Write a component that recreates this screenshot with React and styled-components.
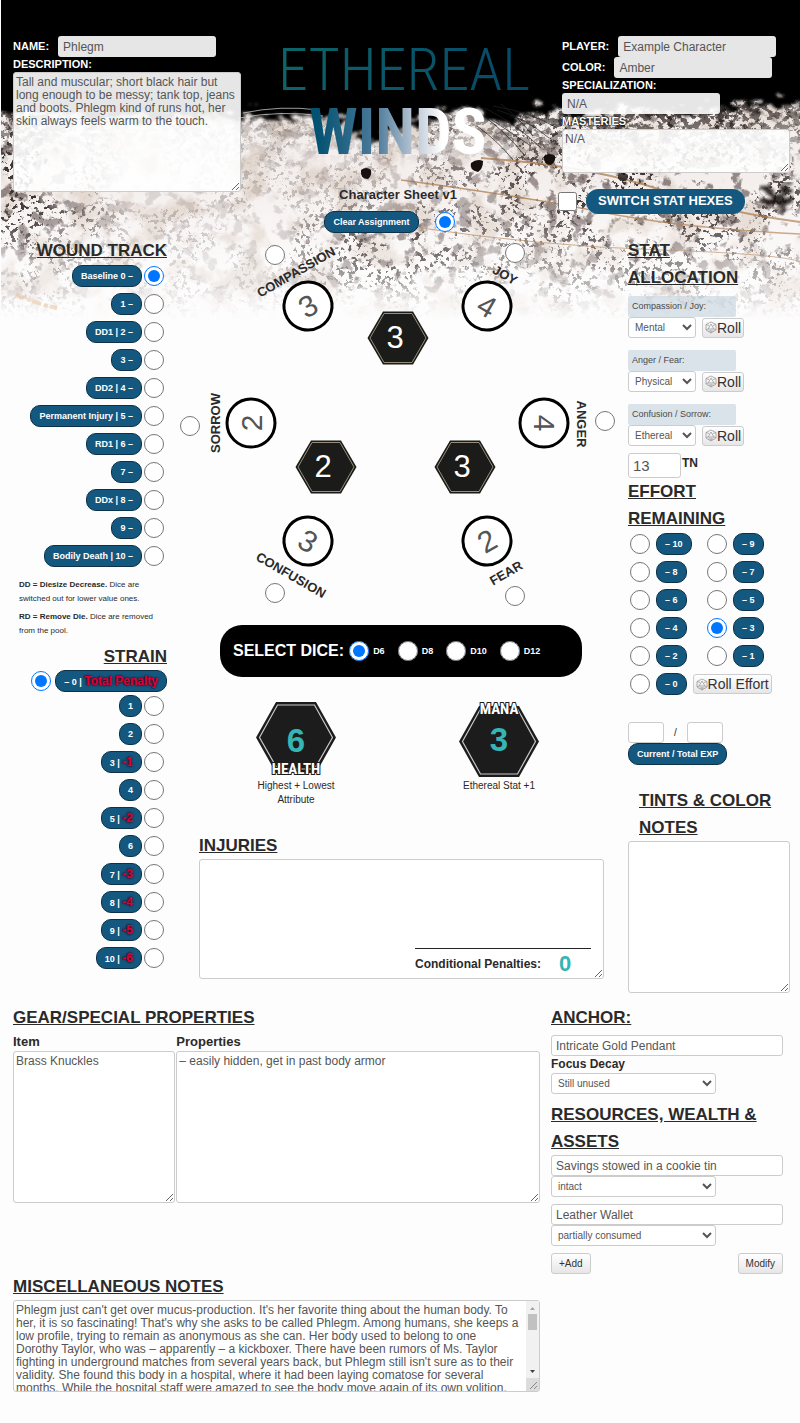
import React from "react";
import styled, { createGlobalStyle, css } from "styled-components";

const Global = createGlobalStyle`
  * { box-sizing: border-box; }
  body {
    margin: 0;
    background: #fdfdfd;
    color: #2a2a2a;
    font-family: "Liberation Sans", Arial, sans-serif;
    font-size: 12px;
  }
  input, select, textarea, button { font-family: inherit; margin: 0; }
`;

const Page = styled.main`
  position: relative;
  padding: 36px 10px 31px 13px;
`;

const Backdrop = styled.svg`
  position: absolute;
  top: 0;
  left: 1px;
  width: 100%;
  height: 330px;
  z-index: -1;
`;

const Header = styled.header`
  display: grid;
  grid-template-columns: 228fr 321fr 228fr;
  height: 201px;
`;

const Field = styled.div`
  display: flex;
  align-items: center;
  gap: 9px;
`;

const HeadLabel = styled.label`
  display: block;
  color: #fff;
  font-weight: bold;
  font-size: 11px;
  line-height: 15px;
  text-transform: uppercase;
  text-shadow: 0 0 2px #000, 0 0 2px #000;
`;

const boxed = css`
  border: 1px solid #ccc;
  border-radius: 3px;
  background: #fff;
  color: #555;
  font-size: 12px;
`;

const TextInput = styled.input`
  ${boxed}
  display: block;
  width: ${(p) => p.$w || "100%"};
  height: ${(p) => p.$h || 21}px;
  padding: 0 4px;
  font-size: ${(p) => p.$size || 12}px;
  ${(p) => p.$veil && "background: rgba(255, 255, 255, 0.9); border-color: transparent;"}
`;

const TextArea = styled.textarea`
  ${boxed}
  display: block;
  width: 100%;
  height: ${(p) => p.$h}px;
  padding: 3px 2px;
  line-height: 13px;
  overflow: hidden;
  ${(p) => p.$veil && "background: rgba(255, 255, 255, 0.9);"}
`;

const Center = styled.div`
  display: flex;
  flex-direction: column;
  align-items: center;
  padding-right: 7px;
`;

const Logo = styled.h1`
  margin: 0;
  height: 150px;
  display: flex;
  flex-direction: column;
  align-items: center;
  font-family: "Roboto Condensed", "Liberation Sans Narrow", Roboto, sans-serif;
  white-space: nowrap;
`;

const LogoTop = styled.span`
  margin-left: 12px;
  font-weight: 300;
  font-size: 60px;
  line-height: 68px;
  color: transparent;
  background: linear-gradient(100deg, #0c6668, #074768);
  background-clip: text;
`;

const LogoBottom = styled.span`
  font-weight: 700;
  font-size: 65px;
  line-height: 56px;
  color: transparent;
  background: linear-gradient(90deg, #045272 5%, #4d7b9a 38%, #b4c2d2 58%, #fff 75%);
  background-clip: text;
`;

const SheetName = styled.p`
  margin: 0;
  height: 25px;
  line-height: 18px;
  font-size: 13px;
  font-weight: bold;
`;

const Pill = styled.label`
  display: inline-block;
  height: ${(p) => (p.$tall ? 25 : 22)}px;
  padding: 0 ${(p) => (p.$tall ? 11 : 8)}px;
  border: 1px solid ${(p) => (p.$tall ? "#15587f" : "#0c3148")};
  border-radius: ${(p) => (p.$tall ? 12 : 10)}px;
  background: #15587f;
  color: #fff;
  font-size: ${(p) => (p.$tall ? 13 : 9)}px;
  font-weight: bold;
  line-height: ${(p) => (p.$tall ? 22 : 20)}px;
  white-space: nowrap;
`;

const Penalty = styled.span`
  color: #e00038;
  font-size: 12px;
  text-shadow: 0 0 2px #200010, 0 0 3px #500020;
`;

const Radio = styled.input.attrs({ type: "radio" })`
  flex: none;
  width: 20px;
  height: 20px;
`;

const Tick = styled.input`
  width: 19px;
  height: 19px;
`;

const ClearRow = styled.div`
  display: flex;
  align-items: center;
  gap: 16px;
  margin-left: -17px;
`;

const SwitchRow = styled.div`
  display: flex;
  align-items: center;
  gap: 9px;
  margin: 16px 0 0 -4px;
`;

const Columns = styled.div`
  display: grid;
  grid-template-columns: 154px minmax(435px, 1fr) 162px;
  column-gap: 13px;
`;

const Heading = styled.h2`
  margin: 0;
  font-size: 17px;
  line-height: 27px;
  text-decoration: underline;
  text-transform: uppercase;
  text-align: ${(p) => (p.$right ? "right" : "left")};
  padding-left: ${(p) => (p.$inset ? 11 : 0)}px;
`;

const Track = styled.div`
  display: flex;
  flex-direction: column;
  margin-top: ${(p) => (p.$tight ? -2 : 0)}px;
`;

const TrackRow = styled.div`
  display: flex;
  justify-content: flex-end;
  align-items: center;
  gap: ${(p) => (p.$first ? 4 : 2)}px;
  height: ${(p) => (p.$first ? 22 : 28)}px;
  padding-right: ${(p) => (p.$first ? 0 : 3)}px;
`;

const Rules = styled.div`
  padding: 8px 0 1px 6px;
  font-size: 8px;
  line-height: 14px;
  white-space: nowrap;
  p { margin: 0 0 4px; }
`;

const Wheel = styled.div`
  position: relative;
  width: 435px;
  height: 388px;
  margin: 0 auto;
`;

const at = css`
  position: absolute;
  left: ${(p) => p.$x}px;
  top: ${(p) => p.$y}px;
  transform: translate(-50%, -50%) rotate(${(p) => p.$turn || 0}deg);
`;

const WheelRadio = styled(Radio)`${at}`;

const WheelLabel = styled.label`
  ${at}
  font-size: 13px;
  font-weight: bold;
`;

const WheelScore = styled.input`
  ${at}
  width: 51px;
  height: 51px;
  padding: 0;
  border: 3px solid #000;
  border-radius: 50%;
  background: #fff;
  color: #555;
  font-size: 30px;
  text-align: center;
`;

const WheelHex = styled.div`
  ${at}
  display: grid;
  place-items: center;
  width: 62px;
  height: 54px;
  padding-right: 6px;
  color: #fff;
  font-size: 31px;
  svg { position: absolute; inset: 0; z-index: -1; }
`;

const DiceBar = styled.fieldset`
  display: flex;
  align-items: center;
  height: 52px;
  min-width: 362px;
  margin: 0 33px 0 40px;
  padding: 0 13px;
  border: 0;
  border-radius: 22px;
  background: #000;
  color: #fff;
`;

const DiceTitle = styled.span`
  margin-right: 5px;
  font-size: 16px;
  font-weight: bold;
`;

const DiceOption = styled.label`
  display: flex;
  align-items: center;
  gap: 4px;
  margin-right: 13px;
  font-size: 9px;
  font-weight: bold;
`;

const Pools = styled.div`
  display: flex;
  justify-content: center;
  gap: 103px;
  height: 155px;
  padding-top: 24px;
`;

const Pool = styled.div`
  display: flex;
  flex-direction: column;
  align-items: center;
  width: 100px;
  font-size: 10px;
  line-height: 14px;
  text-align: center;
`;

const PoolHex = styled.svg`
  width: 82px;
  height: 78px;
  overflow: visible;
  .value { font: bold 33px "Liberation Sans", Arial, sans-serif; fill: #36b5b5; }
  .name {
    font: bold 15px "Roboto Condensed", "Liberation Sans Narrow", Roboto, sans-serif;
    fill: #fff;
    stroke: #1c1c1c;
    stroke-width: 2px;
    paint-order: stroke;
  }
`;

const Injuries = styled.section`
  position: relative;
  margin: 0 11px 0 19px;
`;

const Conditional = styled.div`
  position: absolute;
  right: 13px;
  bottom: 0;
  display: flex;
  align-items: center;
  gap: 18px;
  width: 176px;
  height: 31px;
  border-top: 1px solid #222;
  font-weight: bold;
  white-space: nowrap;
  output { color: #36b5b5; font-size: 22px; }
`;

const StatBlock = styled.div`
  display: grid;
  grid-template-columns: 68px auto;
  justify-content: start;
  column-gap: 6px;
  align-items: center;
  margin-bottom: 12px;
`;

const Allocation = styled.div`
  padding-top: 5px;
`;

const StatLabel = styled.label`
  grid-column: 1 / -1;
  width: 108px;
  height: 21px;
  padding-left: 4px;
  border-radius: 2px;
  background: rgba(190, 206, 218, 0.55);
  color: #4a4a4a;
  font-size: 9px;
  line-height: 21px;
`;

const Select = styled.select`
  ${boxed}
  width: ${(p) => p.$w};
  height: 21px;
  padding: 0 0 0 2px;
  font-size: 10px;
`;

const Button = styled.button`
  display: inline-flex;
  align-items: center;
  justify-content: center;
  height: ${(p) => (p.$roll ? 20 : 21)}px;
  padding: 0 ${(p) => (p.$roll ? 2 : 7)}px;
  border: 1px solid #ccc;
  border-radius: 3px;
  background: linear-gradient(#fff, #e6e6e6);
  color: #333;
  font-size: ${(p) => (p.$roll ? 14 : 10)}px;
  line-height: 18px;
  white-space: nowrap;
`;

const TargetRow = styled.div`
  display: flex;
  gap: 1px;
  margin: -5px 0 0;
  height: 25px;
  label { font-weight: bold; line-height: 20px; }
`;

const Effort = styled.div`
  display: grid;
  grid-template-columns: 73px 1fr;
  column-gap: 4px;
  margin-top: -2px;
  padding-left: 2px;
`;

const EffortCell = styled.div`
  display: flex;
  align-items: center;
  gap: 6px;
  height: 28px;
  ${(p) => p.$wide && "grid-column: 1 / -1;"}
`;

const Experience = styled.div`
  padding: 24px 0 22px;
`;

const ExperienceRow = styled.div`
  display: flex;
  align-items: center;
  gap: 10px;
  font-size: 10px;
`;

const Bottom = styled.div`
  display: grid;
  grid-template-columns: minmax(0, 527fr) minmax(0, 239fr);
  column-gap: 11px;
  margin-top: 11px;
`;

const GearTable = styled.table`
  width: 100%;
  table-layout: fixed;
  border-collapse: collapse;
  margin-bottom: 70px;
  th { height: 20px; padding: 0; font-size: 13px; text-align: left; }
  th:first-child { width: 31%; }
  td { padding: 0; }
  td:first-child { padding-right: 1px; }
`;

const Scroller = styled.div`
  position: relative;
`;

const ScrollBar = styled.svg`
  position: absolute;
  top: 1px;
  right: 1px;
  width: 13px;
  height: 90px;
`;

const Assets = styled.section`
  padding-right: 7px;
`;

const Anchor = styled.div`
  padding: 4px 0 7px;
`;

const SubLabel = styled.label`
  display: block;
  font-size: 12px;
  font-weight: bold;
  line-height: 17px;
`;

const Asset = styled.div`
  margin-bottom: 7px;
`;

const Actions = styled.div`
  display: flex;
  justify-content: space-between;
`;

const D20 = () => (
  <svg width="12" height="13" viewBox="0 0 24 26" fill="none" stroke="#9a9a9a" strokeWidth="1.6" aria-hidden="true">
    <path d="M12 2 L22 7 V18 L12 24 L2 18 V7 Z" />
    <path d="M12 6 L18 16 H6 Z M2 7 L8 9 M22 7 L16 9 M2 18 L6 16 M22 18 L18 16 M12 24 V19 M7 20 H17" />
  </svg>
);

const HexShape = () => (
  <svg viewBox="0 0 62 54" width="62" height="54" aria-hidden="true">
    <path d="M16 0.500 H46 L61.500 27 L46 53.500 H16 L0.500 27 Z" fill="#1b1b19" />
    <path d="M17 2.500 H45 L59 27 L45 51.500 H17 L3 27 Z" fill="none" stroke="#a59c84" strokeWidth="0.900" />
  </svg>
);

const wound = ["Baseline 0 –", "1 –", "DD1 | 2 –", "3 –", "DD2 | 4 –", "Permanent Injury | 5 –", "RD1 | 6 –", "7 –", "DDx | 8 –", "9 –", "Bodily Death | 10 –"];
const strain = [[1], [2], [3, -1], [4], [5, -2], [6], [7, -3], [8, -4], [9, -5], [10, -6]];
const effort = [10, 9, 8, 7, 6, 5, 4, 3, 2, 1, 0];
const emotions = [
  { name: "COMPASSION", v: 3, turn: -30, r: [95, 18], l: [116, 35], c: [128, 69] },
  { name: "JOY", v: 4, turn: 30, r: [335, 16], l: [325, 38], c: [307, 69] },
  { name: "SORROW", v: 2, turn: -90, r: [10, 189], l: [35, 186], c: [71, 186] },
  { name: "ANGER", v: 4, turn: 90, r: [425, 184], l: [401, 187], c: [364, 186] },
  { name: "CONFUSION", v: 3, turn: 30, r: [95, 356], l: [111, 338], c: [128, 304] },
  { name: "FEAR", v: 2, turn: -30, r: [335, 359], l: [326, 336], c: [307, 304] },
];
const hexes = [[3, 218, 101], [2, 146, 230], [3, 285, 230]];
const stats = [["Compassion / Joy:", "Mental"], ["Anger / Fear:", "Physical"], ["Confusion / Sorrow:", "Ethereal"]];
const assets = [["Savings stowed in a cookie tin", "intact"], ["Leather Wallet", "partially consumed"]];
const notes = "Phlegm just can't get over mucus-production. It's her favorite thing about the human body. To her, it is so fascinating! That's why she asks to be called Phlegm. Among humans, she keeps a low profile, trying to remain as anonymous as she can. Her body used to belong to one Dorothy Taylor, who was – apparently – a kickboxer. There have been rumors of Ms. Taylor fighting in underground matches from several years back, but Phlegm still isn't sure as to their validity. She found this body in a hospital, where it had been laying comatose for several months. While the hospital staff were amazed to see the body move again of its own volition,";

const NotesArea = styled(TextArea)`
  padding-right: 19px;
`;

function Grunge() {
  return (
    <Backdrop viewBox="0 0 800 330" preserveAspectRatio="none" aria-hidden="true">
      <defs>
        <linearGradient id="paper" x1="0" y1="0" x2="0" y2="1">
          <stop offset="0.450" stopColor="#f4efed" />
          <stop offset="0.800" stopColor="#fdfcfc" />
          <stop offset="0.950" stopColor="#fdfdfd" />
        </linearGradient>
        <linearGradient id="fade" x1="0" y1="0" x2="0" y2="1">
          <stop offset="0.600" stopColor="#fff" />
          <stop offset="0.860" stopColor="#999" />
          <stop offset="0.970" stopColor="#000" />
        </linearGradient>
        <linearGradient id="edge" x1="0" y1="0" x2="0" y2="1">
          <stop offset="0.330" stopColor="#fff" />
          <stop offset="0.500" stopColor="#000" />
        </linearGradient>
        <radialGradient id="spot">
          <stop offset="0.300" stopColor="#fff" />
          <stop offset="1" stopColor="#fff" stopOpacity="0" />
        </radialGradient>
        <mask id="vertical"><rect width="800" height="330" fill="url(#fade)" /></mask>
        <mask id="upper"><rect width="800" height="330" fill="url(#edge)" /></mask>
        <mask id="patches">
          <rect width="800" height="330" fill="#444" />
          <ellipse cx="20" cy="190" rx="110" ry="120" fill="url(#spot)" />
          <ellipse cx="650" cy="190" rx="290" ry="150" fill="url(#spot)" />
          <ellipse cx="390" cy="250" rx="130" ry="60" fill="url(#spot)" />
        </mask>
        <filter id="specks" x="0" y="0" width="100%" height="100%" colorInterpolationFilters="sRGB">
          <feTurbulence type="fractalNoise" baseFrequency="0.210" numOctaves="3" seed="7" />
          <feColorMatrix values="0 0 0 0 0.170  0 0 0 0 0.130  0 0 0 0 0.130  15 0 0 0 -8.300" result="fine" />
          <feTurbulence type="fractalNoise" baseFrequency="0.024" numOctaves="4" seed="3" />
          <feColorMatrix values="0 0 0 0 0  0 0 0 0 0  0 0 0 0 0  0 9 0 0 -3.800" />
          <feComposite in="fine" operator="in" />
        </filter>
        <filter id="grit" x="0" y="0" width="100%" height="100%" colorInterpolationFilters="sRGB">
          <feTurbulence type="fractalNoise" baseFrequency="0.120 0.160" numOctaves="4" seed="9" />
          <feColorMatrix values="0 0 0 0 0.100  0 0 0 0 0.070  0 0 0 0 0.060  12 0 0 0 -5.500" />
        </filter>
        <filter id="blots" x="0" y="0" width="100%" height="100%" colorInterpolationFilters="sRGB">
          <feTurbulence type="fractalNoise" baseFrequency="0.070" numOctaves="4" seed="21" />
          <feColorMatrix values="0 0 0 0 0.320  0 0 0 0 0.260  0 0 0 0 0.250  0 9 0 0 -5.200" />
        </filter>
        <filter id="tint" x="0" y="0" width="100%" height="100%" colorInterpolationFilters="sRGB">
          <feTurbulence type="fractalNoise" baseFrequency="0.030" numOctaves="4" seed="12" />
          <feColorMatrix values="0 0 0 0 0.800  0 0 0 0 0.720  0 0 0 0 0.660  0 0 5 0 -2.400" />
        </filter>
        <filter id="ragged" x="-5%" y="-10%" width="110%" height="130%">
          <feTurbulence type="fractalNoise" baseFrequency="0.060 0.140" numOctaves="4" seed="5" />
          <feDisplacementMap in="SourceGraphic" scale="44" xChannelSelector="R" yChannelSelector="G" />
          <feGaussianBlur stdDeviation="1.400" />
        </filter>
      </defs>
      <rect y="60" width="800" height="270" fill="url(#paper)" />
      <g mask="url(#vertical)">
        <rect y="60" width="800" height="270" filter="url(#tint)" opacity="0.400" />
        <g mask="url(#patches)">
          <rect y="60" width="800" height="270" filter="url(#specks)" opacity="0.900" />
          <rect y="60" width="800" height="270" filter="url(#blots)" opacity="0.600" />
        </g>
        <g mask="url(#upper)">
          <g mask="url(#patches)">
            <rect y="60" width="800" height="270" filter="url(#grit)" />
          </g>
        </g>
        <g fill="none" stroke="#a87442" opacity="0.700">
          <path d="M480 158 Q590 166 660 190 T800 222" strokeWidth="2" />
          <path d="M400 180 Q520 196 600 212 T800 234" strokeWidth="1.400" />
          <path d="M420 228 Q540 246 660 250 T800 262" strokeWidth="1" />
        </g>
      </g>
      <path d="M15 294 Q35 304 56 308" fill="none" stroke="#ecc9a8" strokeWidth="4" strokeDasharray="9 3 4 2" opacity="0.600" />
      <path d="M-30 -30 H830 V108 L760 104 L690 112 L610 106 L575 120 L540 108 L500 124 L470 108 L440 116 L395 134 L365 144 L335 120 L240 114 L120 120 L50 108 L-30 116 Z" filter="url(#ragged)" />
      <path d="M0 0 H800 V82 H0 Z" />
      <g stroke="#222" fill="none" opacity="0.700">
        <path d="M484 108 Q515 124 540 148 M480 114 Q505 132 524 156 M492 106 Q530 112 556 128 M476 126 Q498 142 512 160 M500 104 Q520 120 532 136 M488 118 Q512 134 530 146 M496 110 Q524 118 548 138" strokeWidth="1" />
        <path d="M238 118 Q280 110 322 116 M242 113 Q280 105 318 110" stroke="#ddd" strokeWidth="1" />
      </g>
      <g fill="#17100f">
        <path d="M360 170 q5 -4 10 0 q1 6 -3 9 q-8 0 -7 -9 Z" />
        <path d="M470 163 q6 -5 12 -2 q0 8 -5 11 q-9 -2 -7 -9 Z" />
        <path d="M543 156 q6 -4 11 0 q1 6 -4 9 q-8 0 -7 -9 Z" />
        <path d="M617 175 q5 -5 10 0 q0 7 -5 6 q-6 0 -5 -6 Z" opacity="0.800" />
        <g filter="url(#ragged)" opacity="0.850">
          <path d="M760 190 q16 -10 30 0 q4 14 -12 22 q-14 -6 -18 -22 Z" />
        </g>
      </g>
    </Backdrop>
  );
}

export default function App() {
  return (
    <>
      <Global />
      <Page>
        <Grunge />
        <Header>
          <div>
            <Field>
              <HeadLabel htmlFor="name">Name:</HeadLabel>
              <TextInput id="name" $veil $w="158px" defaultValue="Phlegm" />
            </Field>
            <HeadLabel htmlFor="desc">Description:</HeadLabel>
            <TextArea id="desc" $veil $h={120} defaultValue="Tall and muscular; short black hair but long enough to be messy; tank top, jeans and boots. Phlegm kind of runs hot, her skin always feels warm to the touch." />
          </div>
          <Center>
            <Logo>
              <LogoTop>ETHEREAL</LogoTop>
              <LogoBottom>WINDS</LogoBottom>
            </Logo>
            <SheetName>Character Sheet v1</SheetName>
            <ClearRow>
              <Pill htmlFor="clear">Clear Assignment</Pill>
              <Radio id="clear" name="assign" defaultChecked />
            </ClearRow>
          </Center>
          <div>
            <Field>
              <HeadLabel htmlFor="player">Player:</HeadLabel>
              <TextInput id="player" $veil $w="158px" defaultValue="Example Character" />
            </Field>
            <Field>
              <HeadLabel htmlFor="color">Color:</HeadLabel>
              <TextInput id="color" $veil $w="158px" defaultValue="Amber" />
            </Field>
            <HeadLabel htmlFor="spec">Specialization:</HeadLabel>
            <TextInput id="spec" $veil $w="158px" defaultValue="N/A" />
            <HeadLabel htmlFor="mast">Masteries:</HeadLabel>
            <TextArea id="mast" $veil $h={44} defaultValue="N/A" />
            <SwitchRow>
              <Tick type="checkbox" id="switch" />
              <Pill $tall htmlFor="switch">SWITCH STAT HEXES</Pill>
            </SwitchRow>
          </div>
        </Header>

        <Columns>
          <section>
            <Heading $right>Wound Track</Heading>
            <Track $tight>
              {wound.map((w, i) => (
                <TrackRow key={w}>
                  <Pill htmlFor={`wound${i}`}>{w}</Pill>
                  <Radio id={`wound${i}`} name="wound" defaultChecked={i === 0} />
                </TrackRow>
              ))}
            </Track>
            <Rules>
              <p><b>DD = Diesize Decrease.</b> Dice are<br />switched out for lower value ones.</p>
              <p><b>RD = Remove Die.</b> Dice are removed<br />from the pool.</p>
            </Rules>
            <Heading $right>Strain</Heading>
            <Track>
              <TrackRow $first>
                <Radio id="strain0" name="strain" defaultChecked />
                <Pill htmlFor="strain0">– 0 | <Penalty>Total Penalty</Penalty></Pill>
              </TrackRow>
              {strain.map(([n, p]) => (
                <TrackRow key={n}>
                  <Pill htmlFor={`strain${n}`}>{n}{p && <> | <Penalty>{p}</Penalty></>}</Pill>
                  <Radio id={`strain${n}`} name="strain" />
                </TrackRow>
              ))}
            </Track>
          </section>

          <section>
            <Wheel>
              {emotions.map((e) => (
                <React.Fragment key={e.name}>
                  <WheelRadio $x={e.r[0]} $y={e.r[1]} name="assign" aria-label={`Assign ${e.name}`} />
                  <WheelLabel htmlFor={e.name} $x={e.l[0]} $y={e.l[1]} $turn={e.turn}>{e.name}</WheelLabel>
                  <WheelScore id={e.name} $x={e.c[0]} $y={e.c[1]} $turn={e.turn} defaultValue={e.v} />
                </React.Fragment>
              ))}
              {hexes.map(([v, x, y]) => (
                <WheelHex key={x} $x={x} $y={y}><HexShape />{v}</WheelHex>
              ))}
            </Wheel>
            <DiceBar>
              <DiceTitle>SELECT DICE:</DiceTitle>
              {["D6", "D8", "D10", "D12"].map((d) => (
                <DiceOption key={d}><Radio name="dice" defaultChecked={d === "D6"} />{d}</DiceOption>
              ))}
            </DiceBar>
            <Pools>
              <Pool>
                <PoolHex viewBox="0 0 82 78">
                  <path d="M21 1 H61 L81 36.500 L61 72 H21 L1 36.500 Z" fill="#1c1c1c" />
                  <path d="M22.500 4 H59.500 L77.500 36.500 L59.500 68 H22.500 L4.500 36.500 Z" fill="none" stroke="#c8c8c8" strokeWidth="1.200" />
                  <text className="value" x="41" y="51" textAnchor="middle">6</text>
                  <text className="name" x="41" y="73" textAnchor="middle">HEALTH</text>
                </PoolHex>
                <span>Highest + Lowest Attribute</span>
              </Pool>
              <Pool>
                <PoolHex viewBox="0 0 82 78">
                  <path d="M21 5 H61 L81 40.500 L61 76 H21 L1 40.500 Z" fill="#1c1c1c" />
                  <path d="M22.500 8 H59.500 L77.500 40.500 L59.500 73 H22.500 L4.500 40.500 Z" fill="none" stroke="#c8c8c8" strokeWidth="1.200" />
                  <text className="value" x="41" y="50" textAnchor="middle">3</text>
                  <text className="name" x="41" y="13" textAnchor="middle">MANA</text>
                </PoolHex>
                <span>Ethereal Stat +1</span>
              </Pool>
            </Pools>
            <Injuries>
              <Heading>Injuries</Heading>
              <TextArea $h={120} aria-label="Injuries" />
              <Conditional><span>Conditional Penalties:</span><output>0</output></Conditional>
            </Injuries>
          </section>

          <section>
            <Heading>Stat<br />Allocation</Heading>
            <Allocation>
              {stats.map(([label, value]) => (
                <StatBlock key={label}>
                  <StatLabel htmlFor={value}>{label}</StatLabel>
                  <Select id={value} $w="100%" defaultValue={value}>
                    <option>Mental</option><option>Physical</option><option>Ethereal</option>
                  </Select>
                  <Button $roll type="button"><D20 />Roll</Button>
                </StatBlock>
              ))}
            </Allocation>
            <TargetRow>
              <TextInput id="tn" $w="53px" $h={25} $size={15} defaultValue="13" />
              <label htmlFor="tn">TN</label>
            </TargetRow>
            <Heading>Effort<br />Remaining</Heading>
            <Effort>
              {effort.map((n) => (
                <EffortCell key={n} $wide={n === 0}>
                  <Radio id={`effort${n}`} name="effort" defaultChecked={n === 3} />
                  <Pill htmlFor={`effort${n}`}>– {n}</Pill>
                  {n === 0 && <Button $roll type="button"><D20 />Roll Effort</Button>}
                </EffortCell>
              ))}
            </Effort>
            <Experience>
              <ExperienceRow>
                <TextInput id="exp" $w="36px" aria-label="Current EXP" />/
                <TextInput $w="36px" aria-label="Total EXP" />
              </ExperienceRow>
              <Pill htmlFor="exp">Current / Total EXP</Pill>
            </Experience>
            <Heading $inset>Tints &amp; Color Notes</Heading>
            <TextArea $h={152} aria-label="Tints and color notes" />
          </section>
        </Columns>

        <Bottom>
          <section>
            <Heading>Gear/Special Properties</Heading>
            <GearTable>
              <thead><tr><th scope="col">Item</th><th scope="col">Properties</th></tr></thead>
              <tbody>
                <tr>
                  <td><TextArea $h={152} aria-label="Item" defaultValue="Brass Knuckles" /></td>
                  <td><TextArea $h={152} aria-label="Properties" defaultValue="– easily hidden, get in past body armor" /></td>
                </tr>
              </tbody>
            </GearTable>
            <Heading>Miscellaneous Notes</Heading>
            <Scroller>
              <NotesArea $h={92} aria-label="Miscellaneous notes" defaultValue={notes} />
              <ScrollBar viewBox="0 0 13 90" aria-hidden="true">
                <rect width="13" height="77" fill="#f1f1f1" />
                <rect y="77" width="13" height="13" fill="#dcdcdc" />
                <rect x="2" y="13" width="9" height="16" fill="#c1c1c1" />
                <path d="M4 9 L6.500 6 L9 9 Z" fill="#a3a3a3" />
                <path d="M4 69 L6.500 72 L9 69 Z" fill="#404040" />
                <path d="M4 88 L11 81 M8 88 L11 85" stroke="#888" />
              </ScrollBar>
            </Scroller>
          </section>
          <Assets>
            <Heading>Anchor:</Heading>
            <Anchor>
              <TextInput aria-label="Anchor" defaultValue="Intricate Gold Pendant" />
              <SubLabel htmlFor="decay">Focus Decay</SubLabel>
              <Select id="decay" $w="165px"><option>Still unused</option></Select>
            </Anchor>
            <Heading>Resources, Wealth &amp; Assets</Heading>
            {assets.map(([name, state]) => (
              <Asset key={name}>
                <TextInput aria-label="Asset" defaultValue={name} />
                <Select $w="165px" aria-label={`${name} state`}><option>{state}</option></Select>
              </Asset>
            ))}
            <Actions>
              <Button type="button">+Add</Button>
              <Button type="button">Modify</Button>
            </Actions>
          </Assets>
        </Bottom>
      </Page>
    </>
  );
}
